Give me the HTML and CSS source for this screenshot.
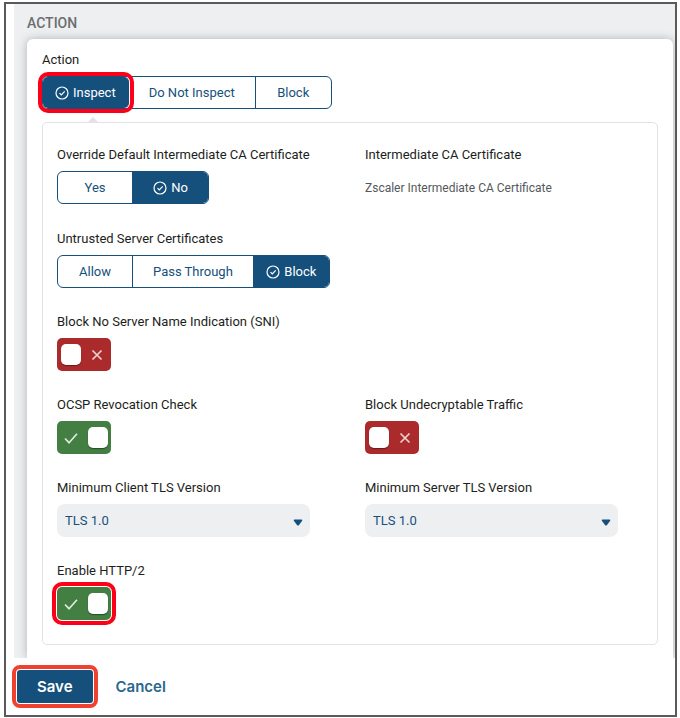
FILE: index.html
```html
<!DOCTYPE html>
<html lang="en">
<head>
  <meta charset="UTF-8" />
  <meta name="viewport" content="width=device-width, initial-scale=1.0"/>
  <title>SSL Inspection Rule</title>
  <link rel="stylesheet" href="styles.css">
</head>
<body>
  <form class="dialog">
    <section class="section">
      <h2 class="section-title">ACTION</h2>

      <div class="card">
        <div class="field">
          <span class="label" id="actionLabel">Action</span>
          <div class="segments" role="group" aria-labelledby="actionLabel">
            <button type="button" class="segment active highlight" aria-pressed="true">
              <svg class="tick" viewBox="0 0 14 14"><circle cx="7" cy="7" r="6"/><path d="M4.5 7.2l1.8 1.8 3.4-3.6"/></svg>
              Inspect
            </button>
            <button type="button" class="segment" aria-pressed="false">Do Not Inspect</button>
            <button type="button" class="segment" aria-pressed="false">Block</button>
          </div>
        </div>

        <div class="panel">
          <div class="field">
            <span class="label" id="overrideLabel">Override Default Intermediate CA Certificate</span>
            <div class="segments" role="group" aria-labelledby="overrideLabel">
              <button type="button" class="segment" aria-pressed="false">Yes</button>
              <button type="button" class="segment active" aria-pressed="true">
                <svg class="tick" viewBox="0 0 14 14"><circle cx="7" cy="7" r="6"/><path d="M4.5 7.2l1.8 1.8 3.4-3.6"/></svg>
                No
              </button>
            </div>
          </div>
          <div class="field">
            <span class="label">Intermediate CA Certificate</span>
            <span class="value">Zscaler Intermediate CA Certificate</span>
          </div>

          <div class="field full">
            <span class="label" id="untrustedLabel">Untrusted Server Certificates</span>
            <div class="segments" role="group" aria-labelledby="untrustedLabel">
              <button type="button" class="segment" aria-pressed="false">Allow</button>
              <button type="button" class="segment" aria-pressed="false">Pass Through</button>
              <button type="button" class="segment active" aria-pressed="true">
                <svg class="tick" viewBox="0 0 14 14"><circle cx="7" cy="7" r="6"/><path d="M4.5 7.2l1.8 1.8 3.4-3.6"/></svg>
                Block
              </button>
            </div>
          </div>

          <div class="field full">
            <label class="label" for="sni">Block No Server Name Indication (SNI)</label>
            <div class="toggle">
              <input type="checkbox" id="sni">
              <svg class="cross" viewBox="0 0 14 14"><path d="M2.5 2.5l9 9M11.5 2.5l-9 9"/></svg>
            </div>
          </div>

          <div class="field">
            <label class="label" for="ocsp">OCSP Revocation Check</label>
            <div class="toggle">
              <input type="checkbox" id="ocsp" checked>
              <svg class="check" viewBox="0 0 14 14"><path d="M1 7.5l4 4.2 8-9"/></svg>
            </div>
          </div>
          <div class="field">
            <label class="label" for="undecryptable">Block Undecryptable Traffic</label>
            <div class="toggle">
              <input type="checkbox" id="undecryptable">
              <svg class="cross" viewBox="0 0 14 14"><path d="M2.5 2.5l9 9M11.5 2.5l-9 9"/></svg>
            </div>
          </div>

          <div class="field">
            <label class="label" for="clientTls">Minimum Client TLS Version</label>
            <div class="dropdown">
              <select id="clientTls">
                <option>TLS 1.0</option>
                <option>TLS 1.1</option>
                <option>TLS 1.2</option>
              </select>
              <svg class="arrow" viewBox="0 0 10 7"><path d="M1.5.5h7q1.5 0 .5 1.5L6 6Q5 7 4 6L1 2Q0 .5 1.5.5z"/></svg>
            </div>
          </div>
          <div class="field">
            <label class="label" for="serverTls">Minimum Server TLS Version</label>
            <div class="dropdown">
              <select id="serverTls">
                <option>TLS 1.0</option>
                <option>TLS 1.1</option>
                <option>TLS 1.2</option>
              </select>
              <svg class="arrow" viewBox="0 0 10 7"><path d="M1.5.5h7q1.5 0 .5 1.5L6 6Q5 7 4 6L1 2Q0 .5 1.5.5z"/></svg>
            </div>
          </div>

          <div class="field full">
            <label class="label" for="http2">Enable HTTP/2</label>
            <div class="toggle highlight">
              <input type="checkbox" id="http2" checked>
              <svg class="check" viewBox="0 0 14 14"><path d="M1 7.5l4 4.2 8-9"/></svg>
            </div>
          </div>
        </div>
      </div>
    </section>

    <div class="footer">
      <button type="button" class="save">Save</button>
      <button type="button" class="cancel">Cancel</button>
    </div>
  </form>
</body>
</html>
```
FILE: styles.css
```css
* {
  box-sizing: border-box;
}

body {
  margin: 0;
  padding: 2px 3px 2px 4px;
  font-family: Roboto, Inter, sans-serif;
  font-size: 13px;
  line-height: 16px;
  color: #2b2d30;
  background: white;
}

button,
select {
  font: inherit;
  cursor: pointer;
}

.dialog {
  border: 2px solid #5a5a5a;
  background: white;
}

.section {
  margin-left: 8px;
  padding: 11px 2px 0 13px;
  background: #edeff1;
  overflow: hidden;
}

.section-title {
  margin: 0 0 8px;
  font-size: 14px;
  font-weight: 500;
  line-height: 16px;
  color: #6c6e70;
}

.card {
  padding: 13px 15px;
  background: white;
  border-radius: 6px 6px 0 0;
  box-shadow: 0 0 10px rgba(0, 0, 0, 0.25);
}

.field {
  display: flex;
  flex-direction: column;
  align-items: flex-start;
  gap: 8px;
}

.full {
  grid-column: 1 / -1;
}

.label {
  color: #1c1e20;
}

.value {
  font-size: 12px;
  line-height: 34px;
  color: #55585b;
}

.segments {
  display: flex;
  height: 33px;
  border: 1px solid #15507c;
  border-radius: 6px;
}

.segment {
  display: flex;
  justify-content: center;
  align-items: center;
  gap: 4px;
  min-width: 75px;
  padding: 0 20px;
  border: none;
  border-right: 1px solid #15507c;
  background: none;
  color: #15507c;
}

.segment.active {
  padding: 0 12px;
  background: #15507c;
  color: white;
}

.segment:first-child {
  border-radius: 5px 0 0 5px;
}

.segment:last-child {
  border-right: none;
  border-radius: 0 5px 5px 0;
}

.tick {
  width: 14px;
  height: 14px;
  fill: none;
  stroke: white;
  stroke-width: 1.2;
}

.highlight {
  outline: 4px solid #fb0018;
  outline-offset: 1px;
}

.segment.highlight {
  border-radius: 5px;
}

.panel {
  position: relative;
  display: grid;
  grid-template-columns: 1fr 1fr;
  gap: 26px 30px;
  margin-top: 13px;
  padding: 24px 14px;
  border: 1px solid #e1e3e5;
  border-radius: 5px;
}

/* pointer up to the selected action */
.panel::before {
  content: "";
  position: absolute;
  top: -6px;
  left: 45px;
  border: 5px solid transparent;
  border-top: none;
  border-bottom-color: #e1e3e5;
}

.toggle {
  display: grid;
  align-items: center;
  border-radius: 5px;
}

.toggle input,
.toggle svg {
  grid-area: 1 / 1;
}

.toggle input {
  appearance: none;
  display: flex;
  align-items: center;
  width: 54px;
  height: 33px;
  margin: 0;
  padding: 0 3px 0 4px;
  border-radius: 5px;
  background: #ab2b2c;
  cursor: pointer;
}

.toggle input::before {
  content: "";
  width: 20px;
  height: 21px;
  border-radius: 5px;
  background: white;
  box-shadow: 0 1px 1px rgba(0, 0, 0, 0.4);
}

.toggle input:checked {
  justify-content: flex-end;
  background: #437e43;
}

.toggle svg {
  width: 14px;
  height: 14px;
  fill: none;
  stroke: #f0d0d0;
  stroke-width: 1.7;
  pointer-events: none;
}

.toggle .cross {
  justify-self: end;
  margin-right: 7px;
}

.toggle .check {
  margin-left: 7px;
  stroke: #dcebdc;
}

.dropdown {
  display: grid;
  align-items: center;
  align-self: stretch;
  margin-right: 25px;
}

.dropdown select,
.arrow {
  grid-area: 1 / 1;
}

.dropdown select {
  appearance: none;
  height: 33px;
  padding: 0 8px;
  border: none;
  border-radius: 8px;
  background: #edeff1;
  color: #15507c;
}

.arrow {
  justify-self: end;
  width: 10px;
  height: 7px;
  margin: 3px 7px 0 0;
  fill: #15507c;
  pointer-events: none;
}

.footer {
  display: flex;
  align-items: center;
  gap: 23px;
  padding: 12px 11px;
  font-family: Inter, sans-serif;
  font-size: 15px;
  font-weight: 600;
}

.footer button {
  border: none;
}

.save {
  height: 33px;
  padding: 0 20px;
  border-radius: 3px;
  background: #15507c;
  color: white;
  outline: 4px solid #ef4130;
  outline-offset: 1px;
}

.cancel {
  padding: 0;
  background: none;
  color: #2a678f;
}
```
